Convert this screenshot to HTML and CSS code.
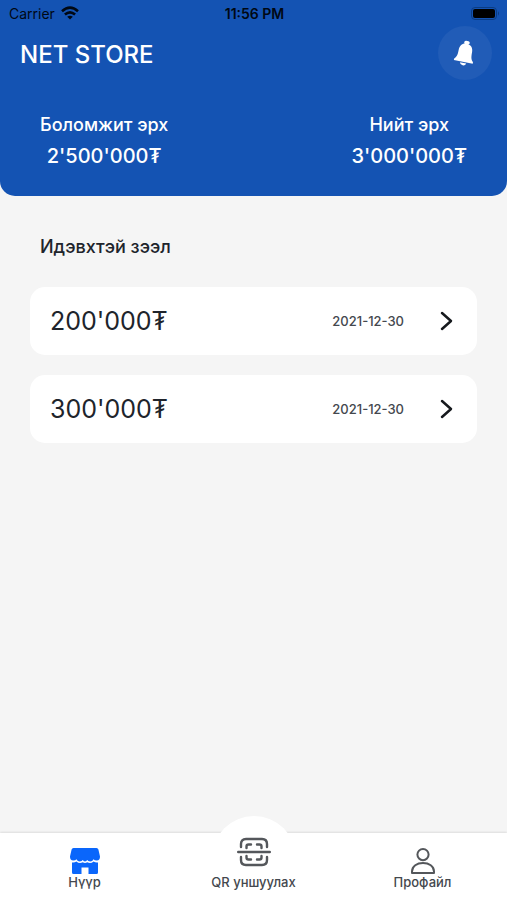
FILE: index.html
```html
<!DOCTYPE html>
<html lang="mn">
<head>
  <meta charset="UTF-8">
  <title>NET STORE</title>
  <meta name="viewport" content="width=device-width, initial-scale=1">
  <link rel="stylesheet" href="styles.css">
</head>
<body>

  <header class="header">
    <div class="status-bar">
      <div class="carrier">
        <span>Carrier</span>
        <svg class="wifi" viewBox="0 0 18 14" fill="none" stroke="#000814" stroke-width="2.6">
          <path d="M1 5.2Q9-1.8 17 5.2"/>
          <path d="M3.9 8.5Q9 4.1 14.1 8.5"/>
          <path d="M9 13.6L6.2 10.8Q9 8.6 11.8 10.8Z" fill="#000814" stroke="none"/>
        </svg>
      </div>
      <span class="time">11:56 PM</span>
      <svg class="battery" viewBox="0 0 29 13">
        <rect x="0.5" y="0.5" width="25" height="12" rx="3.5" fill="none" stroke="#0b3c82"/>
        <rect x="2" y="2" width="22" height="9" rx="2" fill="#000"/>
        <path d="M27 4.3Q29 6.5 27 8.7Z" fill="#0b3c82"/>
      </svg>
    </div>

    <div class="title-row">
      <h1>NET STORE</h1>
      <button class="bell-btn" aria-label="Мэдэгдэл">
        <svg viewBox="0 0 24 26" fill="#fff">
          <g transform="rotate(11 12 13)">
            <ellipse cx="12" cy="2.6" rx="2.8" ry="1.9"/>
            <path d="M12 3.5C16.5 3.5 18.8 6.8 18.8 11C18.8 17 19.6 18.5 21.6 20.5V22H2.4V20.5C4.4 18.5 5.2 17 5.2 11C5.2 6.8 7.5 3.5 12 3.5Z"/>
            <path d="M8.8 23H15.2Q14.6 25.6 12 25.6T8.8 23Z"/>
          </g>
        </svg>
      </button>
    </div>

    <div class="limits">
      <div class="limit">
        <p class="limit-label">Боломжит эрх</p>
        <p class="limit-value">2'500'000₮</p>
      </div>
      <div class="limit">
        <p class="limit-label">Нийт эрх</p>
        <p class="limit-value">3'000'000₮</p>
      </div>
    </div>
  </header>

  <main class="content">
    <h2>Идэвхтэй зээл</h2>
    <div class="loan-list">
      <a class="loan-card" href="#">
        <span class="amount">200'000₮</span>
        <span class="date">2021-12-30</span>
        <svg class="arrow" viewBox="0 0 14 20"><path d="M3 2L12 10L3 18"/></svg>
      </a>
      <a class="loan-card" href="#">
        <span class="amount">300'000₮</span>
        <span class="date">2021-12-30</span>
        <svg class="arrow" viewBox="0 0 14 20"><path d="M3 2L12 10L3 18"/></svg>
      </a>
    </div>
  </main>

  <nav class="tab-bar">
    <a class="tab" href="#">
      <svg class="tab-icon" viewBox="0 0 30 26" fill="#0a66fb">
        <path d="M3.5 0H26.5Q28 0 28.4 1.5L30 8.5Q30 12.6 26.8 12.6Q24.4 12.6 23.6 11.2Q22.4 13.4 20.3 13.4Q18 13.4 17.2 12Q16.5 13.4 15 13.4Q13.5 13.4 12.8 12Q12 13.4 9.7 13.4Q7.6 13.4 6.4 11.2Q5.6 12.6 3.2 12.6Q0 12.6 0 8.5L1.6 1.5Q2 0 3.5 0Z"/>
        <path d="M2 14.4Q4.6 14.8 6.4 13.4Q9.4 16.2 12.8 14.2Q15 15.8 17.2 14.2Q20.6 16.2 23.6 13.4Q25.4 14.8 28 14.4V24.5Q28 26 26.5 26H18.5V19.5H11.5V26H3.5Q2 26 2 24.5Z"/>
      </svg>
      <span>Нүүр</span>
    </a>
    <a class="tab tab-scan" href="#">
      <svg class="scan-icon" viewBox="0 0 34 30" fill="none" stroke="#54575b" stroke-width="2.4" stroke-linecap="round">
        <path d="M1.2 15H32.8"/>
        <path d="M4 10V7Q4 2 9 2H25Q30 2 30 7V10"/>
        <path d="M4 20V23Q4 28 9 28H25Q30 28 30 23V20"/>
        <path d="M9.5 11V9.5Q9.5 7.5 11.5 7.5H14M20 7.5H22.5Q24.5 7.5 24.5 9.5V11"/>
        <path d="M9.5 19V20.5Q9.5 22.5 11.5 22.5H14M20 22.5H22.5Q24.5 22.5 24.5 20.5V19"/>
      </svg>
      <span>QR уншуулах</span>
    </a>
    <a class="tab" href="#">
      <svg class="tab-icon" viewBox="0 0 30 26" fill="none" stroke="#54575b" stroke-width="2">
        <circle cx="15" cy="6.6" r="5.6"/>
        <path d="M4 25V23.5C4 18 9 15 15 15S26 18 26 23.5V25Z" stroke-linejoin="round"/>
      </svg>
      <span>Профайл</span>
    </a>
  </nav>

</body>
</html>
```
FILE: styles.css
```css
* { box-sizing: border-box; margin: 0; padding: 0; }

body {
  font-family: Inter, "Noto Sans", sans-serif;
  min-height: 100vh;
  display: flex;
  flex-direction: column;
  background: #f5f5f5;
  color: #20242b;
}

a { color: inherit; text-decoration: none; }

.header {
  background: #1453b3;
  color: #fff;
  border-radius: 0 0 15px 15px;
  padding-bottom: 24px;
}

/* status bar */
.status-bar {
  display: grid;
  grid-template-columns: 1fr auto 1fr;
  align-items: center;
  height: 26px;
  padding: 0 7px 0 9px;
  font-size: 14px;
  color: #000814;
}
.carrier {
  display: flex;
  align-items: center;
  gap: 6px;
}
.wifi { width: 18px; height: 14px; }
.time { font-weight: 600; }
.battery {
  width: 29px;
  height: 13px;
  justify-self: end;
}

.title-row {
  display: flex;
  justify-content: space-between;
  align-items: center;
  padding: 0 15px 0 20px;
}
.title-row h1 {
  padding-top: 4px;
  font-size: 24px;
  line-height: 30px;
  font-weight: 500;
}
.bell-btn {
  width: 54px;
  height: 54px;
  border: none;
  border-radius: 50%;
  background: #215cb7;
  display: flex;
  align-items: center;
  justify-content: center;
  cursor: pointer;
}
.bell-btn svg { width: 24px; height: 26px; }

.limits {
  display: flex;
  justify-content: space-between;
  padding: 30px 40px 0;
  text-align: center;
}
.limit-label {
  font-size: 18px;
  line-height: 30px;
  font-weight: 500;
}
.limit-value {
  font-size: 20px;
  line-height: 32px;
  font-weight: 500;
}

/* loans */
.content {
  flex: 1;
  padding: 39px 30px 30px;
}
.content h2 {
  font-size: 18px;
  line-height: 24px;
  font-weight: 500;
  padding-left: 10px;
}
.loan-list {
  display: flex;
  flex-direction: column;
  gap: 20px;
  margin-top: 28px;
}
.loan-card {
  display: flex;
  align-items: center;
  height: 68px;
  padding: 0 24px 0 20px;
  background: #fff;
  border-radius: 15px;
}
.amount { flex: 1; font-size: 25px; }
.date {
  font-size: 13px;
  font-weight: 500;
  color: #44484e;
}
.arrow {
  width: 14px;
  height: 20px;
  margin-left: 35px;
  fill: none;
  stroke: #16191d;
  stroke-width: 2.5;
  stroke-linecap: round;
  stroke-linejoin: round;
}

/* bottom tabs */
.tab-bar {
  display: grid;
  grid-template-columns: repeat(3, 1fr);
  height: 67px;
  background: #fff;
  box-shadow: 0 -1px 2px rgba(0,0,0,0.1);
}
.tab {
  position: relative;
  display: flex;
  flex-direction: column;
  align-items: center;
  justify-content: flex-end;
  padding-bottom: 10px;
  font-size: 13px;
  line-height: 16px;
  font-weight: 500;
  color: #44484e;
}
.tab svg, .tab span { position: relative; }
.tab-icon { width: 30px; height: 26px; }
.scan-icon {
  width: 34px;
  height: 30px;
  margin-bottom: 7px;
}
/* white bump behind the scan icon */
.tab-scan::before {
  content: '';
  position: absolute;
  top: -17px;
  left: 50%;
  width: 84px;
  height: 84px;
  border-radius: 50%;
  background: #fff;
  transform: translateX(-50%);
}
```
